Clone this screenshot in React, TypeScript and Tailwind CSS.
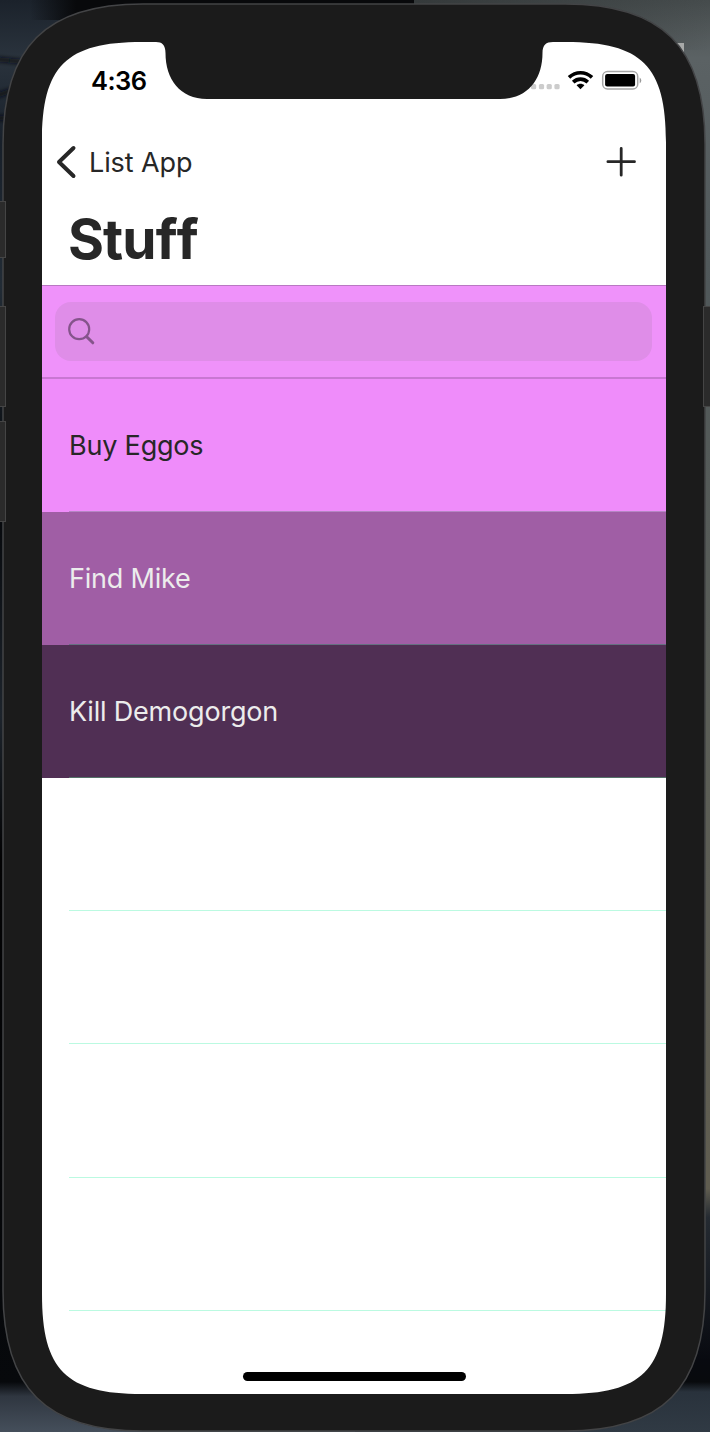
import React from "react";

const items = [
  { label: "Buy Eggos", row: "h-[133px] bg-[#ef8cfa] text-[#272727]", line: "bg-[#b586c4]" },
  { label: "Find Mike", row: "h-[133px] bg-[#a05ea5] text-[#ececec]", line: "bg-[#647080]" },
  { label: "Kill Demogorgon", row: "h-[133px] bg-[#502f54] text-[#ececec]", line: "bg-[#537168]" },
];

const emptyRows = ["h-[133px]", "h-[133px]", "h-[134px]", "h-[133px]"];

// Rounded rectangle with one smooth cubic per corner: e is the corner's extent, c its control offset.
function rounded(x: number, y: number, w: number, h: number, e: number, c: number) {
  const X = x + w;
  const Y = y + h;
  return [
    `M${x + e} ${y}H${X - e}C${X - c} ${y} ${X} ${y + c} ${X} ${y + e}`,
    `V${Y - e}C${X} ${Y - c} ${X - c} ${Y} ${X - e} ${Y}`,
    `H${x + e}C${x + c} ${Y} ${x} ${Y - c} ${x} ${Y - e}`,
    `V${y + e}C${x} ${y + c} ${x + c} ${y} ${x + e} ${y}Z`,
  ].join("");
}

function Wallpaper() {
  return (
    <svg className="absolute inset-0" width="710" height="1432" aria-hidden="true">
      <defs>
        <linearGradient id="left" x2="0" y2="1">
          <stop offset="0" stopColor="#1b222b" />
          <stop offset=".04" stopColor="#2a333d" />
          <stop offset=".1" stopColor="#18202a" />
          <stop offset=".2" stopColor="#222c36" />
          <stop offset=".35" stopColor="#05070a" />
          <stop offset=".5" stopColor="#1d242c" />
          <stop offset=".6" stopColor="#020203" />
          <stop offset=".965" stopColor="#07090c" />
          <stop offset=".975" stopColor="#2f3640" />
          <stop offset="1" stopColor="#454f5b" />
        </linearGradient>
        <linearGradient id="right" x2="0" y2="1">
          <stop offset="0" stopColor="#454b4c" />
          <stop offset=".04" stopColor="#5b6264" />
          <stop offset=".2" stopColor="#50585a" />
          <stop offset=".5" stopColor="#5b5e57" />
          <stop offset=".83" stopColor="#605d50" />
          <stop offset=".85" stopColor="#252b32" />
          <stop offset=".95" stopColor="#080a10" />
          <stop offset=".965" stopColor="#080a0d" />
          <stop offset=".972" stopColor="#29323c" />
          <stop offset="1" stopColor="#303a44" />
        </linearGradient>
        <linearGradient id="top">
          <stop offset="0" stopColor="#08090b" stopOpacity="0" />
          <stop offset=".12" stopColor="#08090b" />
          <stop offset="1" stopColor="#08090b" />
        </linearGradient>
        <linearGradient id="topRight">
          <stop offset="0" stopColor="#353a3b" />
          <stop offset="1" stopColor="#353a3b" stopOpacity="0" />
        </linearGradient>
        <filter id="soft">
          <feGaussianBlur stdDeviation="2" />
        </filter>
      </defs>
      <rect width="355" height="1432" fill="url(#left)" />
      <rect x="355" width="355" height="1432" fill="url(#right)" />
      <rect x="30" width="386" height="20" fill="url(#top)" />
      <rect x="414" width="296" height="50" fill="url(#topRight)" />
      <path d="M-5 59L24 62M-5 96L14 90M-5 118H10" stroke="#0c1118" strokeWidth="4" filter="url(#soft)" />
      <rect x="677" y="43" width="7" height="9" fill="#a8aaa9" />
    </svg>
  );
}

function Bezel() {
  const body = rounded(3, 4, 702, 1427, 140, 42.7);
  const screen = rounded(42, 42, 624, 1352, 100, 24);
  const notch =
    "M150 30V42H156C162 42 165.500 45 165.500 53C165.500 79 180 99 207 99H500C528 99 542.500 79 542.500 53C542.500 45 546 42 553 42H560V30Z";
  return (
    <svg className="pointer-events-none absolute inset-0" width="710" height="1432" aria-hidden="true">
      <path d={body + screen} fill="#1b1b1b" fillRule="evenodd" />
      <path d={body} fill="none" stroke="#434446" strokeWidth="1.5" />
      <path d={notch} fill="#1b1b1b" />
      <g fill="#2b2b2b" stroke="#454545" strokeWidth="1">
        <rect x="-5" y="201.500" width="10.500" height="56" />
        <rect x="-5" y="306.500" width="10.500" height="100" />
        <rect x="-5" y="421.500" width="10.500" height="100" />
        <rect x="703.500" y="306.500" width="12" height="100" />
      </g>
    </svg>
  );
}

function StatusBar() {
  return (
    <div className="flex h-[76px] items-center justify-between pr-[23px] pl-[49px] text-black">
      <time className="pt-[2px] text-[25.5px] font-semibold tracking-[-0.5px]">4:36</time>
      <svg width="112" height="22" viewBox="0 0 112 22" aria-label="Signal, Wi-Fi and battery">
        <g fill="#ccc">
          <rect x="0" y="15" width="5.200" height="5.200" rx="1.500" />
          <rect x="7.900" y="15" width="5.200" height="5.200" rx="1.500" />
          <rect x="15.600" y="15" width="5.200" height="5.200" rx="1.500" />
          <rect x="23.400" y="15" width="5.200" height="5.200" rx="1.500" />
        </g>
        <g fill="none" stroke="#000" strokeWidth="3.700">
          <path d="M38 8.400C44.800 2.200 54.200 2.200 61 8.400" />
          <path d="M42.200 13.200C46.500 9.200 52.500 9.200 56.800 13.200" />
        </g>
        <path d="M45.600 16.200C47.800 14.200 51.200 14.200 53.400 16.200L49.500 20.200Z" />
        <rect x="71.700" y="2.600" width="35" height="17.400" rx="4.800" fill="none" stroke="#a5a5a5" strokeWidth="1.500" />
        <rect x="74.100" y="5" width="30" height="12.500" rx="2" />
        <path d="M108.700 8.500Q112 11.300 108.700 14.500Z" fill="#999" />
      </svg>
    </div>
  );
}

function Header() {
  return (
    <header className="h-[168px] border-b border-[#b978c2] text-[#272727]">
      <div className="flex h-[88px] items-center justify-between pr-[29px] pl-[14px]">
        <button className="flex items-center text-[27px] tracking-[-0.1px]">
          <svg width="21" height="34" viewBox="0 0 21 34" fill="none" aria-hidden="true">
            <path d="M17.500 3L3 17L17.500 31" stroke="currentColor" strokeWidth="4" strokeLinecap="round" strokeLinejoin="round" />
          </svg>
          <span className="ml-[12px] pt-[2px]">List App</span>
        </button>
        <button aria-label="Add">
          <svg className="block" width="32" height="32" viewBox="0 0 32 32" aria-hidden="true">
            <path d="M16.200 2.500V29.200M2.900 15.700H29.500" stroke="currentColor" strokeWidth="2.800" strokeLinecap="round" />
          </svg>
        </button>
      </div>
      <h1 className="pl-[26px] text-[55px] leading-[66px] font-bold tracking-[-0.9px] [font-kerning:none] [font-variant-ligatures:none]">Stuff</h1>
    </header>
  );
}

export default function App() {
  return (
    <div className="relative h-[1432px] w-[710px] overflow-hidden font-['Inter',sans-serif]">
      <Wallpaper />
      <main className="relative mx-[42px] w-[624px] pt-[42px]">
        <div className="flex h-[1352px] flex-col overflow-hidden rounded-[60px] bg-white">
          <StatusBar />
          <Header />
          <div className="h-[93px] border-b-2 border-[#c977d3] bg-[#ef92fa] px-[13px] pt-[16px]">
            <div className="flex h-[59px] w-[597px] items-center rounded-[16px] bg-[#df8de8] pl-[12px]">
              <svg width="30" height="30" viewBox="0 0 30 30" fill="none" stroke="#85548b" strokeLinecap="round" aria-hidden="true">
                <circle cx="12.200" cy="12.200" r="10" strokeWidth="2.200" />
                <path d="M19.700 19.700L25.800 25.800" strokeWidth="3" />
              </svg>
            </div>
          </div>
          {items.map((item) => (
            <div key={item.label} className={`flex shrink-0 flex-col ${item.row}`}>
              <div className="flex flex-1 items-center pt-[3px] pl-[27px] text-[27px] tracking-[-0.2px]">{item.label}</div>
              <div className={`ml-[27px] h-px ${item.line}`} />
            </div>
          ))}
          {emptyRows.map((height, i) => (
            <div key={i} className={`ml-[27px] shrink-0 border-b border-[#bbfae1] ${height}`} />
          ))}
          <div className="flex flex-1 items-end justify-center pb-[13px]">
            <div className="h-[9px] w-[223px] rounded-full bg-black" />
          </div>
        </div>
      </main>
      <Bezel />
    </div>
  );
}
